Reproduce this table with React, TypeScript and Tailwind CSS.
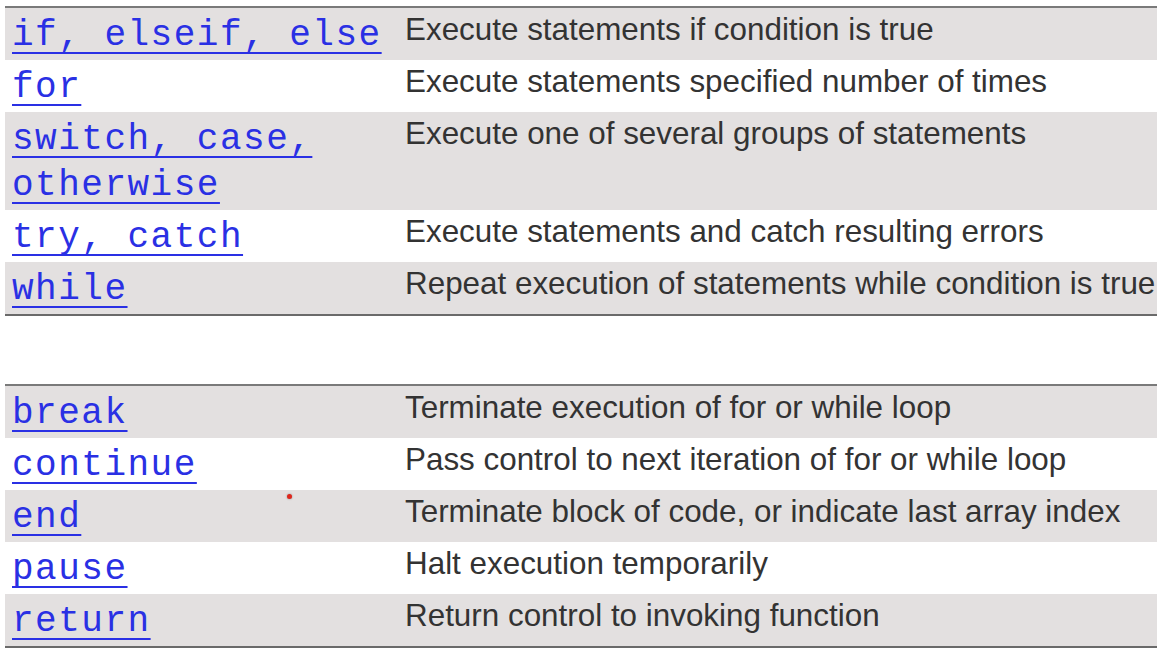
const firstTable = [
  { code: 'if, elseif, else', text: 'Execute statements if condition is true', tall: false },
  { code: 'for', text: 'Execute statements specified number of times', tall: false },
  { code: 'switch, case, otherwise', text: 'Execute one of several groups of statements', tall: true },
  { code: 'try, catch', text: 'Execute statements and catch resulting errors', tall: false },
  { code: 'while', text: 'Repeat execution of statements while condition is true', tall: false },
];

const secondTable = [
  { code: 'break', text: 'Terminate execution of for or while loop', tall: false },
  { code: 'continue', text: 'Pass control to next iteration of for or while loop', tall: false },
  { code: 'end', text: 'Terminate block of code, or indicate last array index', tall: false },
  { code: 'pause', text: 'Halt execution temporarily', tall: false },
  { code: 'return', text: 'Return control to invoking function', tall: false },
];

type Row = { code: string; text: string; tall: boolean };

function KeywordTable({ rows }: { rows: Row[] }) {
  return (
    <div className="ml-[5px] border-t-2 border-b-2 border-t-[#7a7a7a] border-b-[#6a6a6a]">
      {rows.map((row, i) => (
        <div
          key={row.code}
          className={`flex items-start ${row.tall ? 'h-[98px]' : 'h-[52px]'} ${
            i % 2 === 0 ? 'bg-[#e3e0e0]' : 'bg-white'
          }`}
        >
          <div className="w-[400px] shrink-0 pl-[7px] pt-[5px]">
            <a
              href="#"
              className="font-['Liberation_Mono',monospace] text-[36px] leading-[46px] tracking-[1.5px] text-[#2a30e4] underline decoration-2 underline-offset-[7px]"
            >
              {row.code}
            </a>
          </div>
          <div className="pt-[4px] font-['Liberation_Sans',Arial,sans-serif] text-[31.4px] leading-[36px] whitespace-nowrap text-[#333333]">
            {row.text}
          </div>
        </div>
      ))}
    </div>
  );
}

export default function App() {
  return (
    <div className="relative h-[650px] w-[1157px] overflow-hidden bg-white pt-[6px]">
      <KeywordTable rows={firstTable} />
      <div className="h-[68px]" />
      <KeywordTable rows={secondTable} />
      <span className="absolute left-[287px] top-[494px] h-[5px] w-[5px] rounded-full bg-[#e0261c] shadow-[0_0_2px_#888]" />
    </div>
  );
}
